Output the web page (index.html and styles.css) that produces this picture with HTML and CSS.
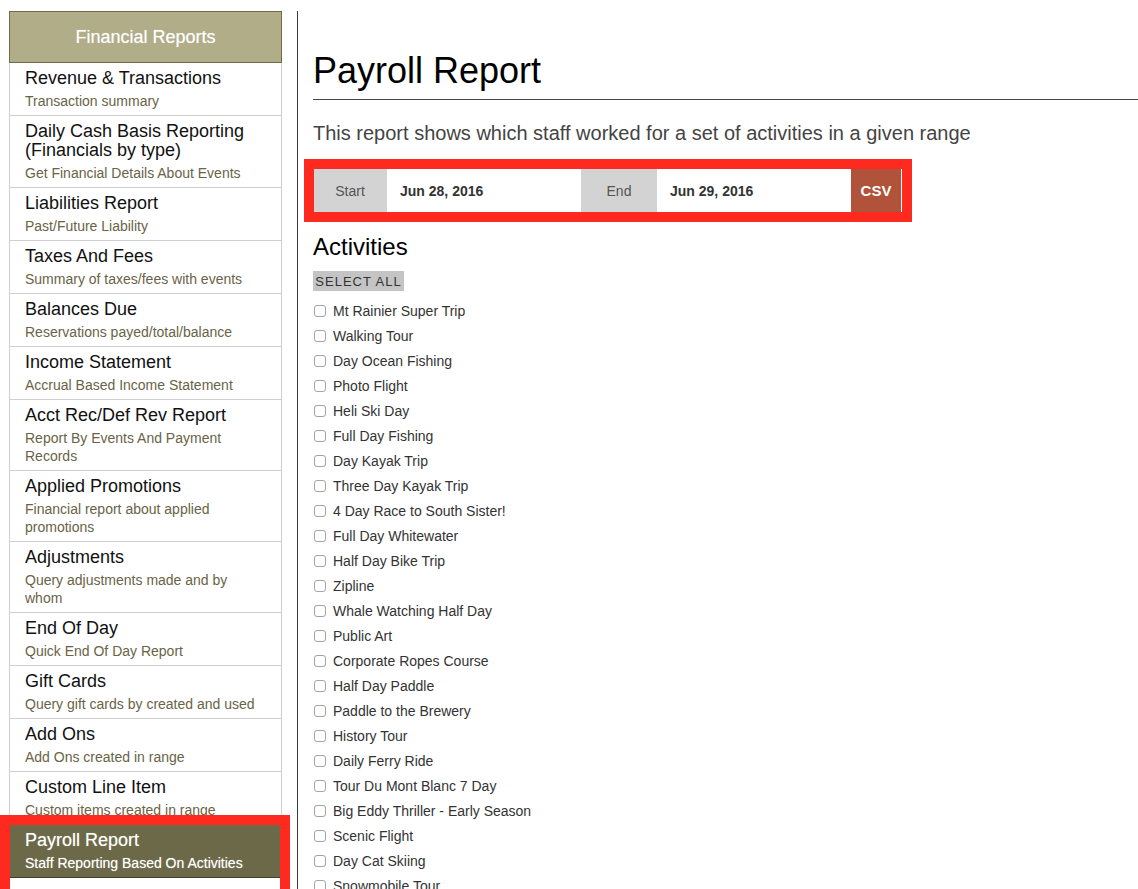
FILE: index.html
```html
<!DOCTYPE html>
<html>
<head>
<meta charset="utf-8">
<title>Payroll Report</title>
<link rel="stylesheet" href="styles.css">
</head>
<body>
<div class="page">
  <aside class="sidebar">
    <div class="side-head">Financial Reports</div>
    <ul class="side-list">
      <li class="side-item"><div class="si-title">Revenue &amp; Transactions</div><div class="si-sub">Transaction summary</div></li>
      <li class="side-item"><div class="si-title">Daily Cash Basis Reporting (Financials by type)</div><div class="si-sub">Get Financial Details About Events</div></li>
      <li class="side-item"><div class="si-title">Liabilities Report</div><div class="si-sub">Past/Future Liability</div></li>
      <li class="side-item"><div class="si-title">Taxes And Fees</div><div class="si-sub">Summary of taxes/fees with events</div></li>
      <li class="side-item"><div class="si-title">Balances Due</div><div class="si-sub">Reservations payed/total/balance</div></li>
      <li class="side-item"><div class="si-title">Income Statement</div><div class="si-sub">Accrual Based Income Statement</div></li>
      <li class="side-item"><div class="si-title">Acct Rec/Def Rev Report</div><div class="si-sub">Report By Events And Payment Records</div></li>
      <li class="side-item"><div class="si-title">Applied Promotions</div><div class="si-sub">Financial report about applied promotions</div></li>
      <li class="side-item"><div class="si-title">Adjustments</div><div class="si-sub">Query adjustments made and by whom</div></li>
      <li class="side-item"><div class="si-title">End Of Day</div><div class="si-sub">Quick End Of Day Report</div></li>
      <li class="side-item"><div class="si-title">Gift Cards</div><div class="si-sub">Query gift cards by created and used</div></li>
      <li class="side-item"><div class="si-title">Add Ons</div><div class="si-sub">Add Ons created in range</div></li>
      <li class="side-item"><div class="si-title">Custom Line Item</div><div class="si-sub">Custom items created in range</div></li>
      <li class="side-item active"><div class="si-title">Payroll Report</div><div class="si-sub">Staff Reporting Based On Activities</div></li>
    </ul>
  </aside>
  <main class="main">
    <h1 class="title">Payroll Report</h1>
    <p class="desc">This report shows which staff worked for a set of activities in a given range</p>
    <div class="filter">
      <div class="f-label">Start</div>
      <div class="f-input">Jun 28, 2016</div>
      <div class="f-label">End</div>
      <div class="f-input">Jun 29, 2016</div>
      <div class="f-csv">CSV</div>
    </div>
    <h2 class="sub-title">Activities</h2>
    <button class="select-all">SELECT ALL</button>
    <ul class="acts">
      <li class="act"><span class="cb"></span>Mt Rainier Super Trip</li>
      <li class="act"><span class="cb"></span>Walking Tour</li>
      <li class="act"><span class="cb"></span>Day Ocean Fishing</li>
      <li class="act"><span class="cb"></span>Photo Flight</li>
      <li class="act"><span class="cb"></span>Heli Ski Day</li>
      <li class="act"><span class="cb"></span>Full Day Fishing</li>
      <li class="act"><span class="cb"></span>Day Kayak Trip</li>
      <li class="act"><span class="cb"></span>Three Day Kayak Trip</li>
      <li class="act"><span class="cb"></span>4 Day Race to South Sister!</li>
      <li class="act"><span class="cb"></span>Full Day Whitewater</li>
      <li class="act"><span class="cb"></span>Half Day Bike Trip</li>
      <li class="act"><span class="cb"></span>Zipline</li>
      <li class="act"><span class="cb"></span>Whale Watching Half Day</li>
      <li class="act"><span class="cb"></span>Public Art</li>
      <li class="act"><span class="cb"></span>Corporate Ropes Course</li>
      <li class="act"><span class="cb"></span>Half Day Paddle</li>
      <li class="act"><span class="cb"></span>Paddle to the Brewery</li>
      <li class="act"><span class="cb"></span>History Tour</li>
      <li class="act"><span class="cb"></span>Daily Ferry Ride</li>
      <li class="act"><span class="cb"></span>Tour Du Mont Blanc 7 Day</li>
      <li class="act"><span class="cb"></span>Big Eddy Thriller - Early Season</li>
      <li class="act"><span class="cb"></span>Scenic Flight</li>
      <li class="act"><span class="cb"></span>Day Cat Skiing</li>
      <li class="act"><span class="cb"></span>Snowmobile Tour</li>
    </ul>
  </main>
  <div class="mark mark-side"></div>
  <div class="mark mark-filter"></div>
</div>
</body>
</html>
```

FILE: styles.css
```css
* { box-sizing: border-box; }
html, body { margin: 0; padding: 0; background: #fff; }
body {
  font-family: "Liberation Sans", Arial, Helvetica, sans-serif;
  color: #222;
}
.page {
  position: relative;
  display: flex;
  align-items: flex-start;
  height: 889px;
  overflow: hidden;
}
.sidebar {
  width: 273px;
  margin-left: 9px;
  margin-top: 11px;
  flex: none;
}
.side-head {
  height: 52px;
  background: #b0ad88;
  border: 1px solid #706d4c;
  color: #fff;
  font-size: 18px;
  line-height: 50px;
  text-align: center;
  text-shadow: 0 0 1px rgba(255,255,255,0.5);
}
.side-list {
  list-style: none;
  margin: 0;
  padding: 0;
  border-left: 1px solid #cfcfcf;
  border-right: 1px solid #cfcfcf;
}
.side-item {
  padding: 6px 20px 5px 15px;
  border-bottom: 1px solid #cfcfcf;
}
.si-title {
  font-size: 18px;
  line-height: 19px;
  color: #111;
}
.si-sub {
  margin-top: 4px;
  font-size: 14px;
  line-height: 18px;
  color: #6a6346;
}
.side-item.active {
  background: #6b6947;
  border-bottom: 1px solid #3f3e2c;
}
.side-item.active .si-title,
.side-item.active .si-sub {
  color: #fff;
  text-shadow: 0 0 1px rgba(255,255,255,0.5);
}

.main {
  flex: 1;
  margin-left: 15px;
  margin-top: 11px;
  min-height: 900px;
  border-left: 1px solid #3a3a3a;
  padding: 39px 0 0 15px;
}
.title {
  margin: 0;
  font-size: 36px;
  font-weight: normal;
  line-height: 42px;
  color: #000;
  padding-bottom: 7px;
  border-bottom: 1px solid #4a4a3c;
}
.desc {
  margin: 21px 0 0;
  font-size: 20px;
  line-height: 24px;
  color: #444;
}
.filter {
  margin-top: 24px;
  width: 588px;
  height: 43px;
  display: grid;
  grid-template-columns: 74px 1fr 76px 1fr 50px;
}
.f-label {
  background: #d3d3d3;
  color: #555;
  font-size: 14px;
  display: flex;
  align-items: center;
  justify-content: center;
}
.f-input {
  background: #fff;
  font-size: 14px;
  font-weight: bold;
  color: #333;
  display: flex;
  align-items: center;
  padding-left: 13px;
}
.f-csv {
  background: #b0533a;
  color: #fff;
  font-weight: bold;
  font-size: 15px;
  display: flex;
  align-items: center;
  justify-content: center;
}
.sub-title {
  margin: 21px 0 0;
  font-size: 24px;
  font-weight: normal;
  line-height: 28px;
  color: #000;
}
.select-all {
  display: block;
  margin-top: 10px;
  height: 20px;
  width: 91px;
  padding: 0;
  border: none;
  background: #c4c4c4;
  color: #333;
  font-family: "Liberation Sans", Arial, sans-serif;
  font-size: 13px;
  letter-spacing: 1px;
}
.acts {
  list-style: none;
  margin: 7px 0 0;
  padding: 0;
}
.act {
  height: 25px;
  display: flex;
  align-items: center;
  gap: 7px;
  font-size: 14px;
  color: #333;
}
.cb {
  width: 12px;
  height: 12px;
  border: 1px solid #a3a3a3;
  border-radius: 3px;
  background: #fff;
  flex: none;
  margin-left: 1px;
}
.mark {
  position: absolute;
  border: 10px solid #ff2a1f;
  pointer-events: none;
}
.mark-side {
  left: 0;
  top: 815px;
  width: 290px;
  height: 90px;
}
.mark-filter {
  left: 304px;
  top: 159px;
  width: 608px;
  height: 63px;
}
```
